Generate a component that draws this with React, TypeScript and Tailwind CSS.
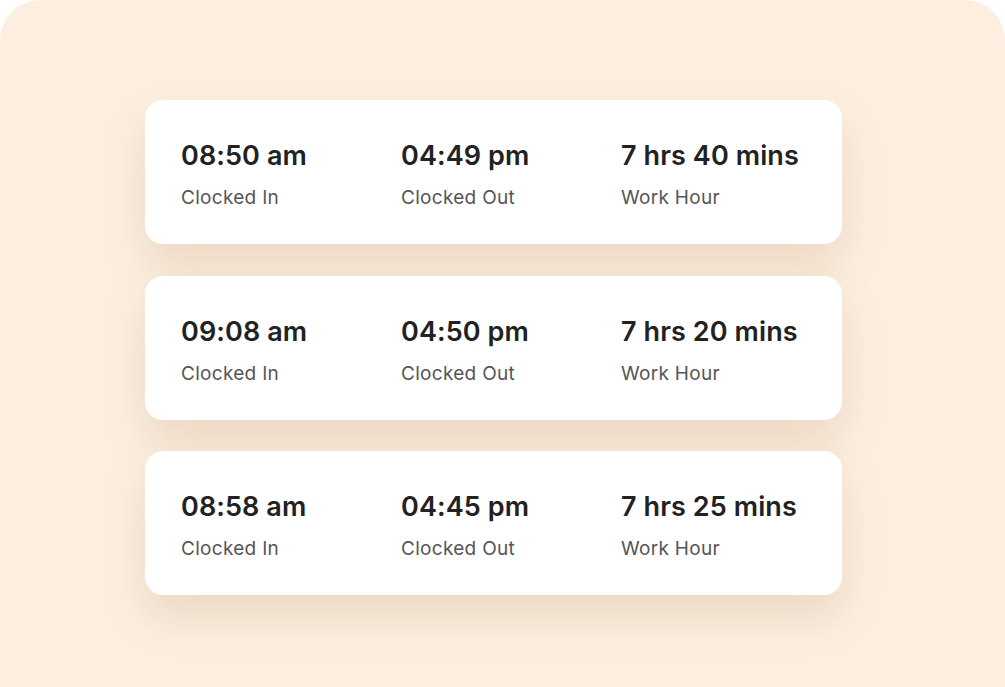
import React from 'react'

const rows = [
  { inTime: '08:50 am', outTime: '04:49 pm', hours: '7 hrs 40 mins' },
  { inTime: '09:08 am', outTime: '04:50 pm', hours: '7 hrs 20 mins' },
  { inTime: '08:58 am', outTime: '04:45 pm', hours: '7 hrs 25 mins' },
]

const Stat = ({ value, label }: { value: string; label: string }) => (
  <div className="w-[220px]">
    <p className="text-[27px] leading-[32px] font-semibold text-[#222222] tracking-[0.1px]">{value}</p>
    <p className="mt-[14px] text-[19px] leading-[24px] text-[#565656] tracking-[0.3px]">{label}</p>
  </div>
)

const App = () => {
  return (
    <div className="w-[1005px] h-[687px] bg-white" style={{ fontFamily: 'Inter, "Noto Sans", sans-serif' }}>
      <div className="h-full bg-[#fdefe0] rounded-t-[40px] pt-[100px] pl-[145px]">
        <div className="flex flex-col gap-[31.5px]">
          {rows.map((r, i) => (
            <div
              key={i}
              className="w-[697px] h-[144px] bg-white rounded-[18px] shadow-[0_22px_45px_rgba(140,95,45,0.16)] flex items-start pt-[40px] pl-[36px]"
            >
              <Stat value={r.inTime} label="Clocked In" />
              <Stat value={r.outTime} label="Clocked Out" />
              <Stat value={r.hours} label="Work Hour" />
            </div>
          ))}
        </div>
      </div>
    </div>
  )
}

export default App
